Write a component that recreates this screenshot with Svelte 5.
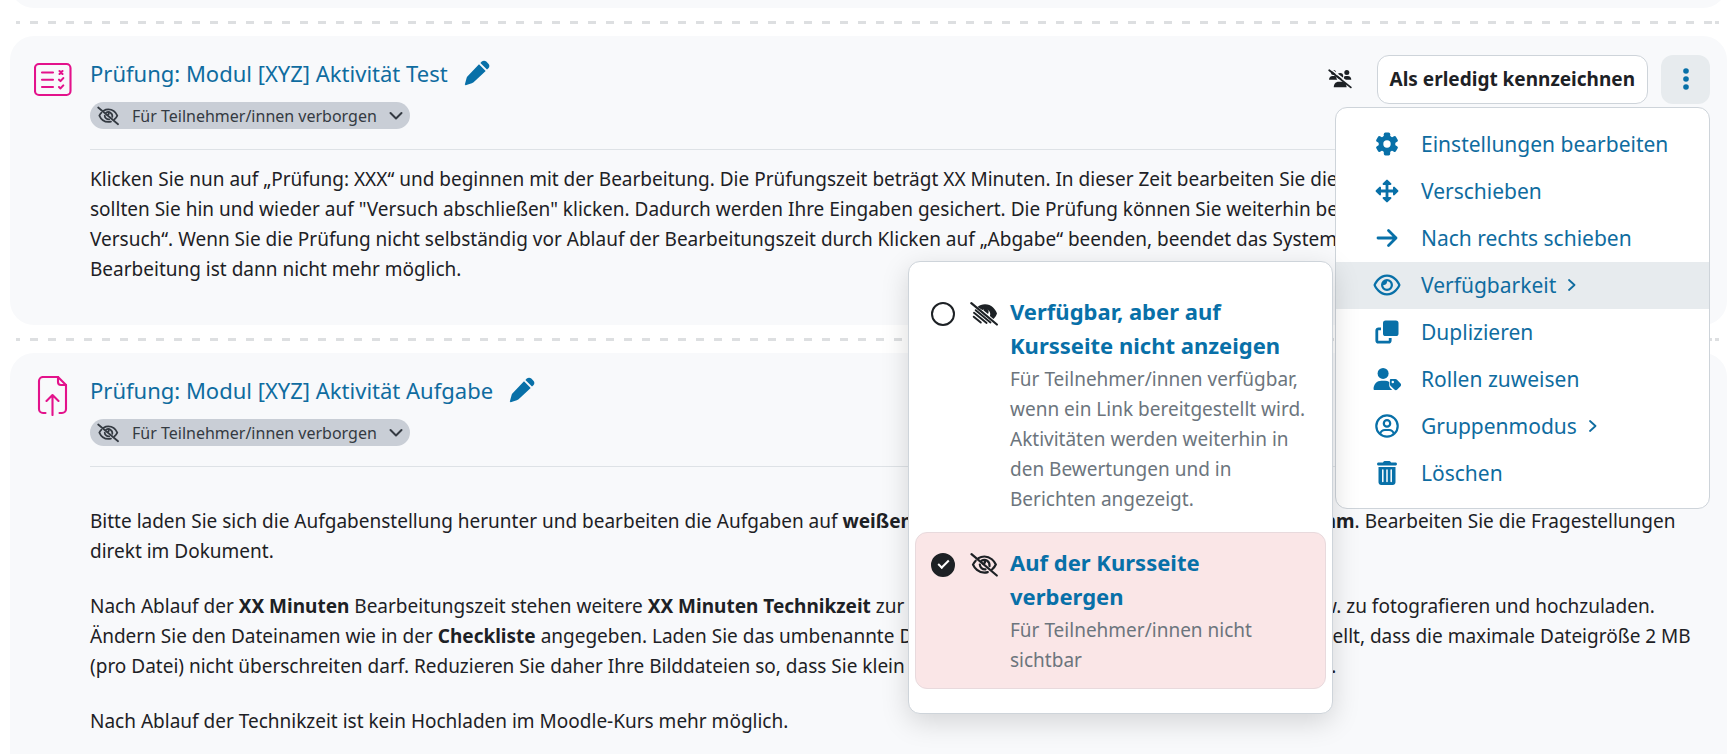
<script>
	const hiddenBadge = 'Für Teilnehmer/innen verborgen';

	const menuItems = [
		{ icon: 'gear', label: 'Einstellungen bearbeiten' },
		{ icon: 'move', label: 'Verschieben' },
		{ icon: 'arrow', label: 'Nach rechts schieben' },
		{ icon: 'eye', label: 'Verfügbarkeit', sub: true },
		{ icon: 'copy', label: 'Duplizieren' },
		{ icon: 'usertag', label: 'Rollen zuweisen' },
		{ icon: 'usercircle', label: 'Gruppenmodus', sub: true },
		{ icon: 'trash', label: 'Löschen' }
	];

	const options = [
		{
			value: 'stealth',
			icon: 'eyelowslash',
			title: 'Verfügbar, aber auf Kursseite nicht anzeigen',
			text: 'Für Teilnehmer/innen verfügbar, wenn ein Link bereitgestellt wird. Aktivitäten werden weiterhin in den Bewertungen und in Berichten angezeigt.'
		},
		{
			value: 'hide',
			icon: 'eyeslash',
			title: 'Auf der Kursseite verbergen',
			text: 'Für Teilnehmer/innen nicht sichtbar'
		}
	];

	let availability = $state('hide');
	let menuOpen = $state(true);
	let activeItem = $state('Verfügbarkeit');
</script>

{#snippet icon(name)}
	{#if name === 'gear'}
		<svg class="icon" viewBox="0 0 24 24" aria-hidden="true">
			<g fill="currentColor">
				<circle cx="12" cy="12" r="8.4" />
				{#each [0, 60, 120, 180, 240, 300] as angle}
					<rect x="8.8" y="0.6" width="6.4" height="7" rx="1.6" transform="rotate({angle} 12 12)" />
				{/each}
			</g>
			<circle cx="12" cy="12" r="3.7" fill="#fff" />
		</svg>
	{:else if name === 'move'}
		<svg class="icon" viewBox="0 0 24 24" aria-hidden="true">
			<path d="M12 3v18M3 12h18" fill="none" stroke="currentColor" stroke-width="2.8" />
			<path
				d="M12 1.6 8.6 5h6.8zM12 22.4 8.6 19h6.8zM1.6 12 5 8.6v6.8zM22.4 12 19 8.6v6.8z"
				fill="currentColor"
				stroke="currentColor"
				stroke-width="2"
				stroke-linejoin="round"
			/>
		</svg>
	{:else if name === 'arrow'}
		<svg class="icon" viewBox="0 0 24 24" aria-hidden="true">
			<path d="M3 12h18M13.5 4.5 21 12l-7.5 7.5" fill="none" stroke="currentColor" stroke-width="2.8" stroke-linecap="round" stroke-linejoin="round" />
		</svg>
	{:else if name === 'eye'}
		<svg class="icon wide" viewBox="0 0 576 512" aria-hidden="true">
			<path fill="currentColor" d="M288 80c-65.2 0-118.8 29.6-159.9 67.7C89.6 183.5 63 226 49.4 256c13.6 30 40.2 72.5 78.6 108.3C169.2 402.4 222.8 432 288 432s118.8-29.6 159.9-67.7C486.4 328.5 513 286 526.6 256c-13.6-30-40.2-72.5-78.6-108.3C406.8 109.6 353.2 80 288 80zM95.4 112.6C142.5 68.8 207.2 32 288 32s145.5 36.8 192.6 80.6c46.8 43.5 78.1 95.4 93 131.1 3.3 7.9 3.3 16.7 0 24.6-14.9 35.7-46.2 87.7-93 131.1C433.5 443.2 368.8 480 288 480s-145.5-36.8-192.6-80.6C48.6 356 17.3 304 2.5 268.3c-3.3-7.9-3.3-16.7 0-24.6C17.3 208 48.6 156 95.4 112.6zM288 336c44.2 0 80-35.8 80-80s-35.8-80-80-80c-.7 0-1.3 0-2 0 1.3 5.1 2 10.5 2 16 0 35.3-28.7 64-64 64-5.5 0-10.9-.7-16-2 0 .7 0 1.3 0 2 0 44.2 35.8 80 80 80zm0-208a128 128 0 1 1 0 256 128 128 0 1 1 0-256z" />
		</svg>
	{:else if name === 'eyeslash'}
		<svg class="icon slash" viewBox="0 0 28 24" aria-hidden="true">
			<g fill="none" stroke="currentColor" stroke-width="2.2" stroke-linecap="round">
				<path d="M8.5 5.2C10 4.2 12 3.5 14.4 3.5c6 0 10 4.7 11.4 8-.7 1.6-2 3.5-3.8 5" />
				<path d="M17.8 19.1c-1.1.3-2.2.5-3.4.5-6 0-10-4.7-11.4-8 .6-1.3 1.5-2.7 2.7-3.9" />
				<path d="M11.5 7.8c3.8-2.3 8.6.4 8 5.4M15.5 16.4c-3.2.3-5.5-2-5.7-4.9" />
				<path d="M14.8 7.5c.6 1.6-.2 2.8-1.5 3.3" />
				<path d="M1.5 1.2 26.8 22.5" />
			</g>
		</svg>
	{:else if name === 'eyelowslash'}
		<svg class="icon slash" viewBox="0 0 28 24" aria-hidden="true">
			<path d="M7.5 4.9C9.5 3.5 12 2.3 15 2.3c6.5 0 10.5 5 12 9.2-.7 2-1.9 3.9-3.6 5.6L19.9 14c1.8-4.5-3.2-8.7-7.5-5.9z" fill="currentColor" />
			<path d="M14 6.8c2.5-.8 4.3.6 4.6 2.5.1 1-.1 1.9-.6 2.7l-4.6-3.8c.5-.4.7-.8.6-1.4z" fill="currentColor" />
			<g fill="none" stroke="currentColor" stroke-width="1.9" stroke-linecap="round">
				<path stroke-width="2.2" d="M1.3 1.2 26.9 22.5" />
				<path d="M5.7 8.2 20.5 20.4M4 10.8 16.6 21M3.7 14.7 10.8 20.6" />
			</g>
		</svg>
	{:else if name === 'copy'}
		<svg class="icon" viewBox="0 0 24 24" aria-hidden="true">
			<rect x="8" y="0.5" width="15.5" height="15.5" rx="2.6" fill="currentColor" />
			<path d="M6 8.8H3.5A1.7 1.7 0 0 0 1.8 10.5v10A1.7 1.7 0 0 0 3.5 22.2h10a1.7 1.7 0 0 0 1.7-1.7V18" fill="none" stroke="currentColor" stroke-width="2.8" />
		</svg>
	{:else if name === 'usertag'}
		<svg class="icon wide" viewBox="0 0 30 24" aria-hidden="true">
			<g fill="currentColor">
				<circle cx="10.8" cy="6" r="5.9" />
				<path d="M.6 22.6C.6 17.8 4.3 14 9 14h4c1.6 0 3.1.4 4.4 1.2v3.6c0 1.2.5 2.3 1.3 3.1l2 1.9H1.8c-.7 0-1.2-.5-1.2-1.2z" />
				<path fill-rule="evenodd" d="M19 12h5c.6 0 1.1.2 1.5.6l4 4.1c.9.9.9 2.2 0 3.1L26 23.3c-.9.9-2.2.9-3.1 0l-4.2-4.1c-.4-.4-.6-.9-.6-1.5v-4.8c0-.5.4-.9.9-.9zm2.2 1.9a1.3 1.3 0 1 0 0 2.6 1.3 1.3 0 0 0 0-2.6z" />
			</g>
		</svg>
	{:else if name === 'usercircle'}
		<svg class="icon" viewBox="0 0 24 24" aria-hidden="true">
			<g fill="none" stroke="currentColor" stroke-width="2.2">
				<circle cx="12" cy="12" r="10.7" />
				<circle cx="12" cy="9.4" r="3.2" />
				<path d="M5 20c.8-2.6 2.5-4 5-4h4c2.5 0 4.2 1.4 5 4" />
			</g>
		</svg>
	{:else if name === 'trash'}
		<svg class="icon" viewBox="0 0 24 24" aria-hidden="true">
			<path fill="currentColor" d="M8.3.9c.3-.6.8-.9 1.4-.9h4.6c.6 0 1.1.3 1.4.9l.4.7h4.4c.8 0 1.5.7 1.5 1.5S21.3 4.6 20.5 4.6h-17C2.7 4.6 2 3.9 2 3.1s.7-1.5 1.5-1.5h4.4z" />
			<path fill="currentColor" d="M3.5 6h17v15.2c0 1.6-1.2 2.8-2.8 2.8H6.3c-1.6 0-2.8-1.2-2.8-2.8z" />
			<path d="M7.8 9v11.5M12 9v11.5M16.2 9v11.5" fill="none" stroke="#fff" stroke-width="1.5" stroke-linecap="round" />
		</svg>
	{:else if name === 'pencil'}
		<svg class="icon pencil" viewBox="0 0 26 26" aria-hidden="true">
			<path fill="currentColor" d="M15 4.3 21.7 11 9.6 22.3c-.5.5-1.1.8-1.8 1L1.7 25.2c-.5.1-1-.3-.8-.9l1.7-6.4c.2-.6.5-1.1 1-1.6z" />
			<path fill="currentColor" d="m16.4 3 1.4-1.4c1.3-1.3 3.2-1.3 4.5 0l2.1 2.1c1.3 1.3 1.3 3.2 0 4.5L23 9.6z" />
		</svg>
	{:else if name === 'groups'}
		<svg class="icon groups" viewBox="0 0 24 20" aria-hidden="true">
			<g fill="currentColor">
				<circle cx="5.5" cy="3.6" r="2.5" />
				<circle cx="18.8" cy="3.6" r="2.5" />
				<circle cx="12.2" cy="7" r="3" />
				<path d="M1 10.8c0-2.3 1.5-3.7 3.5-3.7h2.2c.7 0 1.3.2 1.8.5-.3 1.3 0 2.3.8 3.2zM15 10.8c.8-.9 1.1-1.9.9-3.1.5-.4 1.2-.6 1.9-.6h2c2 0 3.5 1.4 3.5 3.7zM5.8 18.3c0-3.5 2-5.6 4.8-5.6h3.2c2.8 0 4.8 2.1 4.8 5.6z" />
			</g>
			<path d="M2.4-.2 24.4 17.2" fill="none" stroke="#f8f9fb" stroke-width="1.6" />
			<path d="M1.2 1.2 22.8 18.4" fill="none" stroke="currentColor" stroke-width="1.8" stroke-linecap="round" />
		</svg>
	{:else if name === 'quiz'}
		<svg class="activity-icon" viewBox="0 0 38 40" aria-hidden="true">
			<g fill="none" stroke="currentColor" stroke-width="2.1" stroke-linecap="round" stroke-linejoin="round">
				<rect x="1" y="5" width="35.5" height="31" rx="4" />
				<path d="M8 13.5h11M8 20.7h11M8 28h11M25.5 12l3 3m0-3-3 3M25 20.7l1.5 1.4 2.8-3M25 28l1.5 1.4 2.8-3" />
			</g>
		</svg>
	{:else if name === 'assign'}
		<svg class="activity-icon" viewBox="0 0 38 40" aria-hidden="true">
			<g fill="none" stroke="currentColor" stroke-width="2.1" stroke-linecap="round" stroke-linejoin="round">
				<path d="M11.5 37H9a4 4 0 0 1-4-4V5a4 4 0 0 1 4-4h15l8 8v24a4 4 0 0 1-4 4h-2.5" />
				<path d="M24 1v5a3 3 0 0 0 3 3h5" />
				<path d="M18.5 39V20M12.5 25l6-6 6 6" />
			</g>
		</svg>
	{/if}
{/snippet}

{#snippet activityHead(name, title)}
	<div class="title-row">
		<a class="activity-link" href="#{name}">{title}</a>
		<button class="plain edit" aria-label="Titel bearbeiten">{@render icon('pencil')}</button>
	</div>
	<button class="badge">
		{@render icon('eyeslash')}
		<span>{hiddenBadge}</span>
		<svg class="caret" viewBox="0 0 14 10" aria-hidden="true">
			<path d="M1.5 2 7 7.5 12.5 2" fill="none" stroke="currentColor" stroke-width="2" stroke-linecap="round" stroke-linejoin="round" />
		</svg>
	</button>
{/snippet}

<main>
	<section class="card previous"></section>
	<div class="divider"></div>

	<section class="card first">
		<div class="activity-type">{@render icon('quiz')}</div>
		<div class="content">
			<div class="head">
				<div>{@render activityHead('test', 'Prüfung: Modul [XYZ] Aktivität Test')}</div>
				<div class="actions">
					<button class="plain" aria-label="Gruppenmodus">{@render icon('groups')}</button>
					<button class="done">Als erledigt kennzeichnen</button>
					<div class="dropdown">
						<button class="more" aria-label="Bearbeiten" aria-expanded={menuOpen} onclick={() => (menuOpen = !menuOpen)}>
							<svg viewBox="0 0 8 24" aria-hidden="true">
								<g fill="currentColor">
									<circle cx="4" cy="4" r="2.8" />
									<circle cx="4" cy="12" r="2.8" />
									<circle cx="4" cy="20" r="2.8" />
								</g>
							</svg>
						</button>
						{#if menuOpen}
							<div class="menu">
								{#each menuItems as item}
									<button class="menu-item" class:active={activeItem === item.label} onclick={() => (activeItem = item.label)}>
										<span class="icon-slot">{@render icon(item.icon)}</span>
										<span>{item.label}</span>
										{#if item.sub}
											<svg class="chevron" viewBox="0 0 8 14" aria-hidden="true">
												<path d="M1 2l5.5 5L1 12" fill="none" stroke="currentColor" stroke-width="1.8" stroke-linecap="round" stroke-linejoin="round" />
											</svg>
										{/if}
									</button>
								{/each}

								{#if activeItem === 'Verfügbarkeit'}
									<div class="submenu">
										{#each options as option}
											<label class="option" class:selected={availability === option.value}>
												<input type="radio" name="availability" value={option.value} bind:group={availability} />
												{@render icon(option.icon)}
												<span class="option-body">
													<strong>{option.title}</strong>
													<small>{option.text}</small>
												</span>
											</label>
										{/each}
									</div>
								{/if}
							</div>
						{/if}
					</div>
				</div>
			</div>
			<div class="description">
				<p>
					Klicken Sie nun auf „Prüfung: XXX“ und beginnen mit der Bearbeitung. Die Prüfungszeit beträgt XX Minuten. In
					dieser Zeit bearbeiten Sie die gestellten Aufgaben. Zwischendurch sollten Sie hin und wieder auf "Versuch
					abschließen" klicken. Dadurch werden Ihre Eingaben gesichert. Die Prüfung können Sie weiterhin bearbeiten
					über „Fortsetzen Ihres letzten Versuch“. Wenn Sie die Prüfung nicht selbständig vor Ablauf der
					Bearbeitungszeit durch Klicken auf „Abgabe“ beenden, beendet das System den Versuch automatisch. Eine
					Bearbeitung ist dann nicht mehr möglich.
				</p>
			</div>
		</div>
	</section>

	<div class="divider"></div>

	<section class="card">
		<div class="activity-type">{@render icon('assign')}</div>
		<div class="content">
			<div class="head">
				<div>{@render activityHead('aufgabe', 'Prüfung: Modul [XYZ] Aktivität Aufgabe')}</div>
			</div>
			<div class="description spaced">
				<p>
					Bitte laden Sie sich die Aufgabenstellung herunter und bearbeiten die Aufgaben auf
					<strong>weißen A4-Blättern</strong> oder auch digital im <strong>Textprogramm</strong>. Bearbeiten Sie die
					Fragestellungen direkt im Dokument.
				</p>
				<p>
					Nach Ablauf der <strong>XX Minuten</strong> Bearbeitungszeit stehen weitere
					<strong>XX Minuten Technikzeit</strong> zur Verfügung, um die Lösungen einzuscannen bzw. zu fotografieren und
					hochzuladen. Ändern Sie den Dateinamen wie in der <strong>Checkliste</strong> angegeben. Laden Sie das
					umbenannte Dokument hoch. Das System ist dabei so eingestellt, dass die maximale Dateigröße 2 MB (pro Datei)
					nicht überschreiten darf. Reduzieren Sie daher Ihre Bilddateien so, dass Sie klein genug für das Hochladen
					dieser Lösungen sind.
				</p>
				<p>Nach Ablauf der Technikzeit ist kein Hochladen im Moodle-Kurs mehr möglich.</p>
			</div>
		</div>
	</section>
</main>

<style>
	:global(body) {
		background: #fff;
		overflow: hidden;
	}

	main {
		display: flow-root;
		padding: 0 8px 0 10px;
		font-family: 'Segoe UI', 'Noto Sans', sans-serif;
		font-size: 19px;
		line-height: 30px;
		color: #1d2125;
	}

	button {
		font: inherit;
		color: inherit;
		cursor: pointer;
	}

	.plain {
		display: flex;
		padding: 0;
		border: 0;
		background: none;
	}

	.card {
		display: flex;
		gap: 18px;
		padding: 20px 17px 41px 24px;
		border-radius: 24px;
		background: #f8f9fb;
	}

	/* tail of the activity scrolled out above */
	.card.previous {
		height: 60px;
		margin-top: -52px;
		padding: 0;
	}

	.divider {
		height: 3px;
		margin: 13px 8px 12px 6px;
		background: repeating-linear-gradient(90deg, #dddfe1 0 8px, transparent 8px 18px);
		background-position-x: -4px;
	}

	.activity-type {
		flex: none;
		width: 38px;
		padding-top: 3px;
		color: #e3128b;
	}

	.activity-icon {
		display: block;
		width: 38px;
		height: 40px;
	}

	.content {
		flex: 1;
		min-width: 0;
	}

	.head {
		display: flex;
		justify-content: space-between;
		padding-bottom: 20px;
		border-bottom: 1px solid #dee2e6;
	}

	.title-row {
		display: flex;
		align-items: center;
		gap: 16px;
		height: 34px;
	}

	.activity-link {
		font-size: 22px;
		color: #0f6ca0;
		text-decoration: none;
	}

	.edit {
		color: #0870a8;
	}

	.icon {
		flex: none;
		width: 24px;
		height: 24px;
	}

	.icon.wide {
		width: 28px;
	}

	.icon.slash {
		width: 28px;
		height: 24px;
	}

	.icon.pencil {
		width: 26px;
		height: 26px;
	}

	.icon.groups {
		width: 24px;
		height: 20px;
	}

	.badge {
		display: flex;
		align-items: center;
		height: 27px;
		margin-top: 12px;
		padding: 0 7px;
		border: 0;
		border-radius: 14px;
		background: #c9ced6;
		color: #343a42;
		font-size: 16px;
	}

	.badge .icon {
		width: 22px;
		height: 20px;
	}

	.badge span {
		margin: 0 12px 0 13px;
	}

	.caret {
		width: 14px;
		height: 10px;
	}

	.actions {
		display: flex;
		align-items: center;
		height: 46px;
	}

	.done {
		height: 49px;
		margin: 0 13px 0 25px;
		padding: 0 12px;
		border: 1px solid #ced4da;
		border-radius: 12px;
		background: #fff;
		font-weight: 700;
	}

	.dropdown {
		position: relative;
	}

	.more {
		display: flex;
		align-items: center;
		justify-content: center;
		width: 49px;
		height: 49px;
		border: 0;
		border-radius: 12px;
		background: #e7ebee;
		color: #0870a8;
	}

	.more svg {
		width: 8px;
		height: 24px;
	}

	.menu {
		position: absolute;
		z-index: 2;
		top: 52px;
		right: 0;
		width: 375px;
		box-sizing: border-box;
		padding: 13px 0 11px;
		border: 1px solid #ced4da;
		border-radius: 12px;
		background: #fff;
	}

	.menu-item {
		display: flex;
		align-items: center;
		width: 100%;
		height: 47px;
		padding: 0 0 0 36px;
		border: 0;
		background: none;
		color: #0f6ca0;
		font-size: 21px;
	}

	.menu-item.active {
		background: #e7ebee;
	}

	.icon-slot {
		display: flex;
		justify-content: center;
		width: 30px;
		margin-right: 19px;
		color: #0870a8;
	}

	.chevron {
		width: 8px;
		height: 14px;
		margin-left: 12px;
	}

	.submenu {
		position: absolute;
		top: 153px;
		right: 376px;
		display: flex;
		flex-direction: column;
		gap: 4px;
		width: 425px;
		box-sizing: border-box;
		padding: 19px 6px 24px;
		border: 1px solid #ced4da;
		border-radius: 12px;
		background: #fff;
		box-shadow: 0 8px 28px rgba(0, 0, 0, 0.15);
	}

	.option {
		display: flex;
		align-items: flex-start;
		padding: 12px 8px 13px 15px;
		border: 1px solid transparent;
		border-radius: 12px;
	}

	.option.selected {
		border-color: #e8dadd;
		background: #fae6e7;
	}

	.option input {
		flex: none;
		appearance: none;
		width: 24px;
		height: 24px;
		margin: 8px 14px 0 0;
		border: 2px solid #1d2125;
		border-radius: 50%;
	}

	.option input:checked {
		display: grid;
		place-items: center;
		background: #1d2125;
	}

	.option input:checked::before {
		content: '';
		width: 9px;
		height: 4px;
		margin-bottom: 3px;
		border: solid #fff;
		border-width: 0 0 2px 2px;
		transform: rotate(-45deg);
	}

	.option .icon {
		width: 30px;
		height: 24px;
		margin: 8px 11px 0 0;
	}

	.option-body {
		max-width: 300px;
	}

	.option strong {
		display: block;
		color: #0870a8;
		font-size: 22px;
		line-height: 34px;
	}

	.option small {
		display: block;
		margin-top: 2px;
		color: #6c757d;
		font-size: 19px;
		line-height: 30px;
	}

	.description {
		padding: 14px 12px 0 0;
	}

	.description p {
		margin: 0 0 25px;
	}

	.description.spaced {
		padding-top: 39px;
	}

	.first .description p {
		margin: 0;
	}
</style>
